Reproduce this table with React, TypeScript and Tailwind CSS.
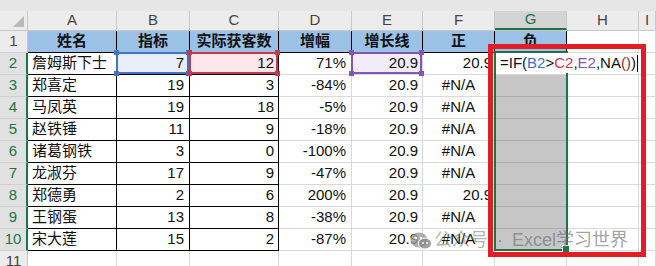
import React from 'react';

type Col = { key: string; w: string };

const COLS: Col[] = [
  { key: 'A', w: 'w-[89px]' },
  { key: 'B', w: 'w-[73px]' },
  { key: 'C', w: 'w-[89px]' },
  { key: 'D', w: 'w-[73px]' },
  { key: 'E', w: 'w-[71px]' },
  { key: 'F', w: 'w-[72px]' },
  { key: 'G', w: 'w-[72px]' },
  { key: 'H', w: 'w-[72px]' },
  { key: 'I', w: 'flex-1' },
];

const HEAD = ['姓名', '指标', '实际获客数', '增幅', '增长线', '正', '负'];

const ROWS: [string, number, number, string, string, string][] = [
  ['詹姆斯下士', 7, 12, '71%', '20.9', '20.9'],
  ['郑喜定', 19, 3, '-84%', '20.9', '#N/A'],
  ['马凤英', 19, 18, '-5%', '20.9', '#N/A'],
  ['赵铁锤', 11, 9, '-18%', '20.9', '#N/A'],
  ['诸葛钢铁', 3, 0, '-100%', '20.9', '#N/A'],
  ['龙淑芬', 17, 9, '-47%', '20.9', '#N/A'],
  ['郑德勇', 2, 6, '200%', '20.9', '20.9'],
  ['王钢蛋', 13, 8, '-38%', '20.9', '#N/A'],
  ['宋大莲', 15, 2, '-87%', '20.9', '#N/A'],
];

// reference highlight drawn while a formula is being edited
const RefBox = ({ border, fill, dot }: { border: string; fill: string; dot: string }) => (
  <div className={`absolute -left-px -top-px right-0 bottom-0 border-2 z-10 ${border} ${fill}`}>
    <span className={`absolute -left-[4px] -top-[4px] w-[5px] h-[5px] ${dot}`} />
    <span className={`absolute -right-[4px] -top-[4px] w-[5px] h-[5px] ${dot}`} />
    <span className={`absolute -left-[4px] -bottom-[4px] w-[5px] h-[5px] ${dot}`} />
    <span className={`absolute -right-[4px] -bottom-[4px] w-[5px] h-[5px] ${dot}`} />
  </div>
);

const RowHead = ({ n, sel }: { n: number; sel: boolean }) => (
  <div
    className={`w-[28px] shrink-0 h-full flex items-center justify-center box-border border-b border-[#d0d0d0] ${
      sel ? 'bg-[#e1e1e1] text-[#217346] border-r-2 border-r-[#217346]' : 'bg-[#ececec] text-[#444] border-r border-r-[#c8c8c8]'
    }`}
  >
    {n}
  </div>
);

function DataRow({ r, i }: { r: (typeof ROWS)[number]; i: number }) {
  const [name, b, c, d, e, f] = r;
  const base = 'h-full shrink-0 box-border border-r border-b flex items-center relative';
  const dark = 'border-black';
  const grid = 'border-[#d9d9d9]';
  const first = i === 0;
  return (
    <div className="flex h-[22px]">
      <RowHead n={i + 2} sel />
      <div className={`${base} ${dark} w-[89px] pl-[4px]`}>{name}</div>
      <div className={`${base} ${dark} w-[73px] justify-end pr-[5px]`}>
        {first && <RefBox border="border-[#4472c4]" fill="bg-[#e7edf9]" dot="bg-[#4472c4]" />}
        <span className="relative z-20">{b}</span>
      </div>
      <div className={`${base} ${dark} w-[89px] justify-end pr-[4px]`}>
        {first && <RefBox border="border-[#c5394b]" fill="bg-[#fbe7e9]" dot="bg-[#c5394b]" />}
        <span className="relative z-20">{c}</span>
      </div>
      <div className={`${base} ${grid} w-[73px] justify-end pr-[5px]`}>{d}</div>
      <div className={`${base} ${grid} w-[71px] justify-end pr-[4px]`}>
        {first && <RefBox border="border-[#8158b0]" fill="bg-[#f1ecf8]" dot="bg-[#8158b0]" />}
        <span className="relative z-20">{e}</span>
      </div>
      <div className={`${base} ${grid} w-[72px] ${f === '#N/A' ? 'justify-center' : 'justify-end pr-[2px]'}`}>{f}</div>
      <div className={`${base} w-[72px] ${first ? 'bg-white border-[#d9d9d9]' : 'bg-[#c6c6c6] border-[#adadad]'}`} />
      <div className={`${base} ${grid} w-[72px]`} />
      <div className={`${base} ${grid} flex-1`} />
    </div>
  );
}

export default function App() {
  return (
    <div className="relative w-[656px] h-[266px] overflow-hidden bg-white text-[15px] text-[#111] font-['Liberation_Sans','Noto_Sans_CJK_SC',sans-serif]">
      <div className="h-[11px] bg-[#e6e6e6]" />

      {/* column letters */}
      <div className="flex h-[19px] bg-[#ececec] text-[#444] border-b border-[#c8c8c8] box-content">
        <div className="w-[28px] shrink-0 h-full relative border-r border-[#c8c8c8] box-border">
          <svg className="absolute right-[3px] bottom-[3px]" width="11" height="11" viewBox="0 0 11 11">
            <polygon points="11,0 11,11 0,11" fill="#b8b8b8" />
          </svg>
        </div>
        {COLS.map((c) => (
          <div
            key={c.key}
            className={`${c.w} shrink-0 h-full box-border flex items-center justify-center border-r border-[#c8c8c8] ${
              c.key === 'G' ? 'bg-[#d4d4d4] text-[#217346] border-b-2 border-b-[#217346]' : ''
            }`}
          >
            {c.key}
          </div>
        ))}
      </div>

      {/* row 1: headings */}
      <div className="flex h-[22px]">
        <RowHead n={1} sel={false} />
        {COLS.map((c, i) =>
          i < HEAD.length ? (
            <div
              key={c.key}
              className={`${c.w} shrink-0 h-full box-border border-r border-b border-black bg-[#9bc2e6] font-bold flex items-center justify-center`}
            >
              {HEAD[i]}
            </div>
          ) : (
            <div key={c.key} className={`${c.w} shrink-0 h-full box-border border-r border-b border-[#d9d9d9]`} />
          )
        )}
      </div>

      {ROWS.map((r, i) => (
        <DataRow key={i} r={r} i={i} />
      ))}

      {/* row 11 */}
      <div className="flex h-[22px]">
        <RowHead n={11} sel={false} />
        {COLS.map((c) => (
          <div key={c.key} className={`${c.w} shrink-0 h-full box-border border-r border-b border-[#d9d9d9]`} />
        ))}
      </div>

      {/* selection G2:G10 */}
      <div className="absolute left-[494px] top-[51px] w-[74px] h-[200px] border-2 border-[#217346] z-30">
        <span className="absolute -right-[4px] -bottom-[4px] w-[6px] h-[6px] bg-[#217346] border border-white box-content" />
      </div>

      {/* in-cell editor */}
      <div className="absolute left-[496px] top-[53px] w-[143px] h-[20px] bg-white z-30 flex items-center pl-[4px] whitespace-nowrap">
        <span>=IF(</span>
        <span className="text-[#3d6ec4]">B2</span>
        <span>&gt;</span>
        <span className="text-[#c5394b]">C2</span>
        <span>,</span>
        <span className="text-[#8158b0]">E2</span>
        <span>,NA</span>
        <span className="text-[#a0282d]">()</span>
        <span>)</span>
        <span className="ml-px w-px h-[17px] bg-black" />
      </div>

      {/* red callout */}
      <div className="absolute left-[488px] top-[44px] w-[158px] h-[213px] border-[5px] border-[#e31d25] z-40" />

      {/* watermark */}
      <div className="absolute left-[410px] top-[227px] z-50 flex items-center text-[18px] text-[#6e6e6e]/65 whitespace-nowrap">
        <svg width="22" height="20" viewBox="0 0 22 20">
          <ellipse cx="9" cy="9" rx="8.5" ry="7.5" fill="#9a9a9a" fillOpacity="0.8" />
          <ellipse cx="15" cy="12.5" rx="6.5" ry="5.5" fill="#8a8a8a" fillOpacity="0.8" stroke="#fff" strokeWidth="1" />
          <circle cx="6" cy="7" r="1.2" fill="#fff" />
          <circle cx="11" cy="7" r="1.2" fill="#fff" />
          <circle cx="13" cy="12" r="0.9" fill="#fff" />
          <circle cx="17" cy="12" r="0.9" fill="#fff" />
        </svg>
        <span className="ml-[2px] text-[#6e6e6e]/55">公众号</span>
        <span className="mx-[9px]">·</span>
        <span>Excel学习世界</span>
      </div>
    </div>
  );
}
